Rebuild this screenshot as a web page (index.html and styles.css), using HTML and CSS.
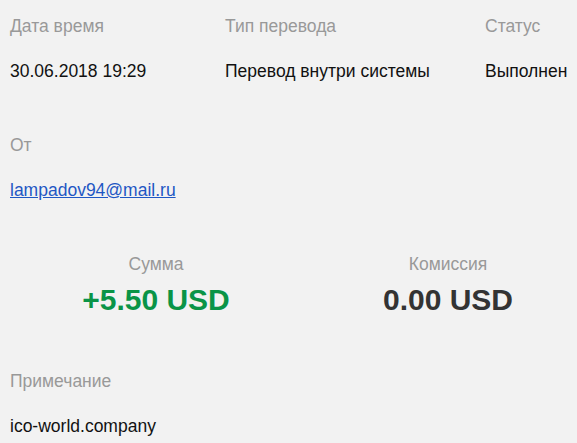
FILE: index.html
```html
<!DOCTYPE html>
<html lang="ru">

<head>
	<meta charset="UTF-8">
	<title>Перевод</title>
	<link rel="stylesheet" href="styles.css">
</head>

<body>
	<div class="details">
		<section class="row top">
			<div class="field">
				<div class="label">Дата время</div>
				<div class="value">30.06.2018 19:29</div>
			</div>
			<div class="field">
				<div class="label">Тип перевода</div>
				<div class="value">Перевод внутри системы</div>
			</div>
			<div class="field">
				<div class="label">Статус</div>
				<div class="value">Выполнен</div>
			</div>
		</section>

		<section class="row">
			<div class="field">
				<div class="label">От</div>
				<div class="value"><a href="#">lampadov94@mail.ru</a></div>
			</div>
		</section>

		<section class="row sums">
			<div class="sum">
				<div class="label">Сумма</div>
				<div class="amount plus">+5.50 USD</div>
			</div>
			<div class="sum">
				<div class="label">Комиссия</div>
				<div class="amount">0.00 USD</div>
			</div>
		</section>

		<section class="row">
			<div class="field">
				<div class="label">Примечание</div>
				<div class="value">ico-world.company</div>
			</div>
		</section>
	</div>
</body>

</html>
```

FILE: styles.css
```css
* {
	margin: 0;
	padding: 0;
	box-sizing: border-box;
}

html,
body {
	height: 100%;
	overflow: hidden;
}

body {
	font-family: "Liberation Sans", Arial, sans-serif;
	font-size: 17.5px;
	line-height: 20px;
	background-color: #f2f2f2;
	color: #111;
}

.details {
	width: 584px;
	margin-left: 10px;
	padding-top: 16px;
}

.row {
	padding-bottom: 54px;
}

.row:last-child {
	padding-bottom: 0;
}

.row.top {
	display: grid;
	grid-template-columns: 215px 260px 1fr;
}

.label {
	color: #999;
}

.value {
	padding-top: 25px;
	white-space: nowrap;
}

.value a {
	color: #1f57c4;
}

.sums {
	display: grid;
	grid-template-columns: 1fr 1fr;
	text-align: center;
	padding-bottom: 53px;
}

.amount {
	font-size: 30px;
	line-height: 36px;
	font-weight: bold;
	color: #333;
	margin-top: 8px;
}

.amount.plus {
	color: #0a9447;
}
```
